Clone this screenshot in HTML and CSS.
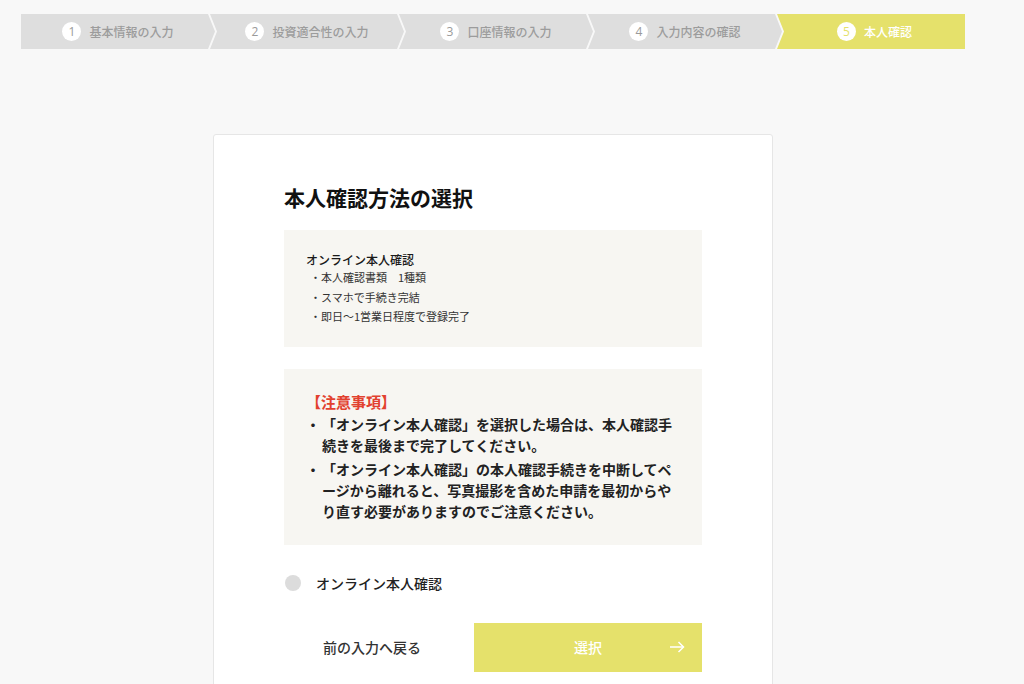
FILE: index.html
```html
<!DOCTYPE html>
<html lang="ja">
<head>
  <meta charset="utf-8">
  <title>本人確認方法の選択</title>
  <link rel="stylesheet" href="styles.css">
</head>
<body>
  <div class="page">
    <ol class="steps">
      <li class="step step-first"><span class="step-num">1</span>基本情報の入力</li>
      <li class="step"><span class="step-num">2</span>投資適合性の入力</li>
      <li class="step"><span class="step-num">3</span>口座情報の入力</li>
      <li class="step"><span class="step-num">4</span>入力内容の確認</li>
      <li class="step step-last is-current"><span class="step-num">5</span>本人確認</li>
    </ol>

    <div class="card">
      <h1>本人確認方法の選択</h1>

      <div class="method-box">
        <p class="method-name">オンライン本人確認</p>
        <ul class="method-points">
          <li>・本人確認書類　1種類</li>
          <li>・スマホで手続き完結</li>
          <li>・即日〜1営業日程度で登録完了</li>
        </ul>
      </div>

      <div class="notice">
        <p class="notice-title">【注意事項】</p>
        <ul class="notice-list">
          <li><span class="mark">・</span><span>「オンライン本人確認」を選択した場合は、本人確認手続きを最後まで完了してください。</span></li>
          <li><span class="mark">・</span><span>「オンライン本人確認」の本人確認手続きを中断してページから離れると、写真撮影を含めた申請を最初からやり直す必要がありますのでご注意ください。</span></li>
        </ul>
      </div>

      <label class="radio">
        <input type="radio" name="method">
        <span class="radio-dot"></span>
        オンライン本人確認
      </label>

      <div class="actions">
        <a class="back-link" href="#">前の入力へ戻る</a>
        <button class="submit" type="button">
          <span class="submit-label">選択</span>
          <svg class="submit-arrow" width="16" height="12" viewBox="0 0 16 12" fill="none" stroke="#fff" stroke-width="1.5">
            <path d="M1 6h13.5"/>
            <path d="M9.5 1l5 5-5 5"/>
          </svg>
        </button>
      </div>
    </div>
  </div>
</body>
</html>
```

FILE: styles.css
```css
:root {
  --page-bg: #f8f8f8;
  --text: #1a1a1a;
  --step-grey: #dedede;
  --step-text: #9c9c9c;
  --accent: #e5e16b;
  --box-bg: #f7f6f2;
  --border: #e6e6e6;
  --red: #e2412f;
}

body {
  margin: 0;
  background: var(--page-bg);
  color: var(--text);
  font-family: "Noto Sans CJK JP", "Noto Sans", sans-serif;
}

.page {
  padding: 14px 0 0 21px;
}

/* progress steps */

.steps {
  display: flex;
  list-style: none;
  margin: 0;
  padding: 0;
}

.step {
  width: 194px;
  height: 35px;
  margin-left: -5px;
  padding: 0 7px;
  box-sizing: border-box;
  display: flex;
  align-items: center;
  justify-content: center;
  gap: 8px;
  background: var(--step-grey);
  color: var(--step-text);
  font-size: 12px;
  font-weight: 500;
  clip-path: polygon(0 0, calc(100% - 7px) 0, 100% 50%, calc(100% - 7px) 100%, 0 100%, 7px 50%);
}

.step-first {
  margin-left: 0;
  padding: 0;
  clip-path: polygon(0 0, calc(100% - 7px) 0, 100% 50%, calc(100% - 7px) 100%, 0 100%);
}

.step-last {
  width: 188px;
  padding: 0 0 0 7px;
  clip-path: polygon(0 0, 100% 0, 100% 100%, 0 100%, 7px 50%);
}

.step-num {
  width: 19px;
  height: 19px;
  border-radius: 50%;
  background: #fff;
  display: flex;
  align-items: center;
  justify-content: center;
  font-family: "Open Sans", sans-serif;
  font-size: 12px;
  color: #9a9a9a;
}

.step.is-current {
  background: var(--accent);
  color: #fff;
}

.step.is-current .step-num {
  color: var(--accent);
}

/* card */

.card {
  width: 560px;
  margin: 85px 0 0 192px;
  padding: 46px 70px 46px;
  box-sizing: border-box;
  background: #fff;
  border: 1px solid var(--border);
  border-radius: 3px;
}

h1 {
  margin: 0 0 17px;
  font-size: 21px;
  line-height: 32px;
  font-weight: 700;
  color: #111;
}

.method-box {
  background: var(--box-bg);
  padding: 22px 22px 20px;
}

.method-name {
  margin: 0;
  font-size: 12px;
  line-height: 16px;
  font-weight: 500;
}

.method-points {
  list-style: none;
  margin: 0;
  padding: 0 0 0 4px;
  font-size: 11px;
  line-height: 19.5px;
  color: #333;
}

.notice {
  margin-top: 22px;
  background: var(--box-bg);
  padding: 22px 22px 23px;
}

.notice-title {
  margin: 0 0 2px;
  color: var(--red);
  font-size: 15px;
  line-height: 21px;
  font-weight: 700;
}

.notice-list {
  list-style: none;
  margin: 0;
  padding: 0;
  font-size: 14px;
  line-height: 21px;
  font-weight: 700;
  color: #222;
}

.notice-list li {
  display: flex;
}

.notice-list li + li {
  margin-top: 3px;
}

.mark {
  flex: none;
  width: 16px;
}

/* radio */

.radio {
  margin-top: 28px;
  display: flex;
  align-items: center;
  gap: 15px;
  font-size: 14px;
  line-height: 20px;
  font-weight: 500;
  color: #222;
  cursor: pointer;
}

.radio input {
  display: none;
}

.radio-dot {
  width: 16px;
  height: 16px;
  margin-left: 1px;
  border-radius: 50%;
  background: #dcdcdc;
}

/* buttons */

.actions {
  margin-top: 30px;
  display: flex;
  align-items: center;
  gap: 14px;
}

.back-link {
  width: 176px;
  text-align: center;
  font-size: 14px;
  font-weight: 500;
  color: #333;
  text-decoration: none;
}

.submit {
  width: 228px;
  height: 49px;
  border: none;
  background: var(--accent);
  color: #fff;
  font-family: inherit;
  font-size: 14px;
  font-weight: 500;
  display: grid;
  grid-template-columns: 1fr auto 1fr;
  align-items: center;
  padding: 0 17px;
  cursor: pointer;
}

.submit-label {
  grid-column: 2;
}

.submit-arrow {
  justify-self: end;
}
```
